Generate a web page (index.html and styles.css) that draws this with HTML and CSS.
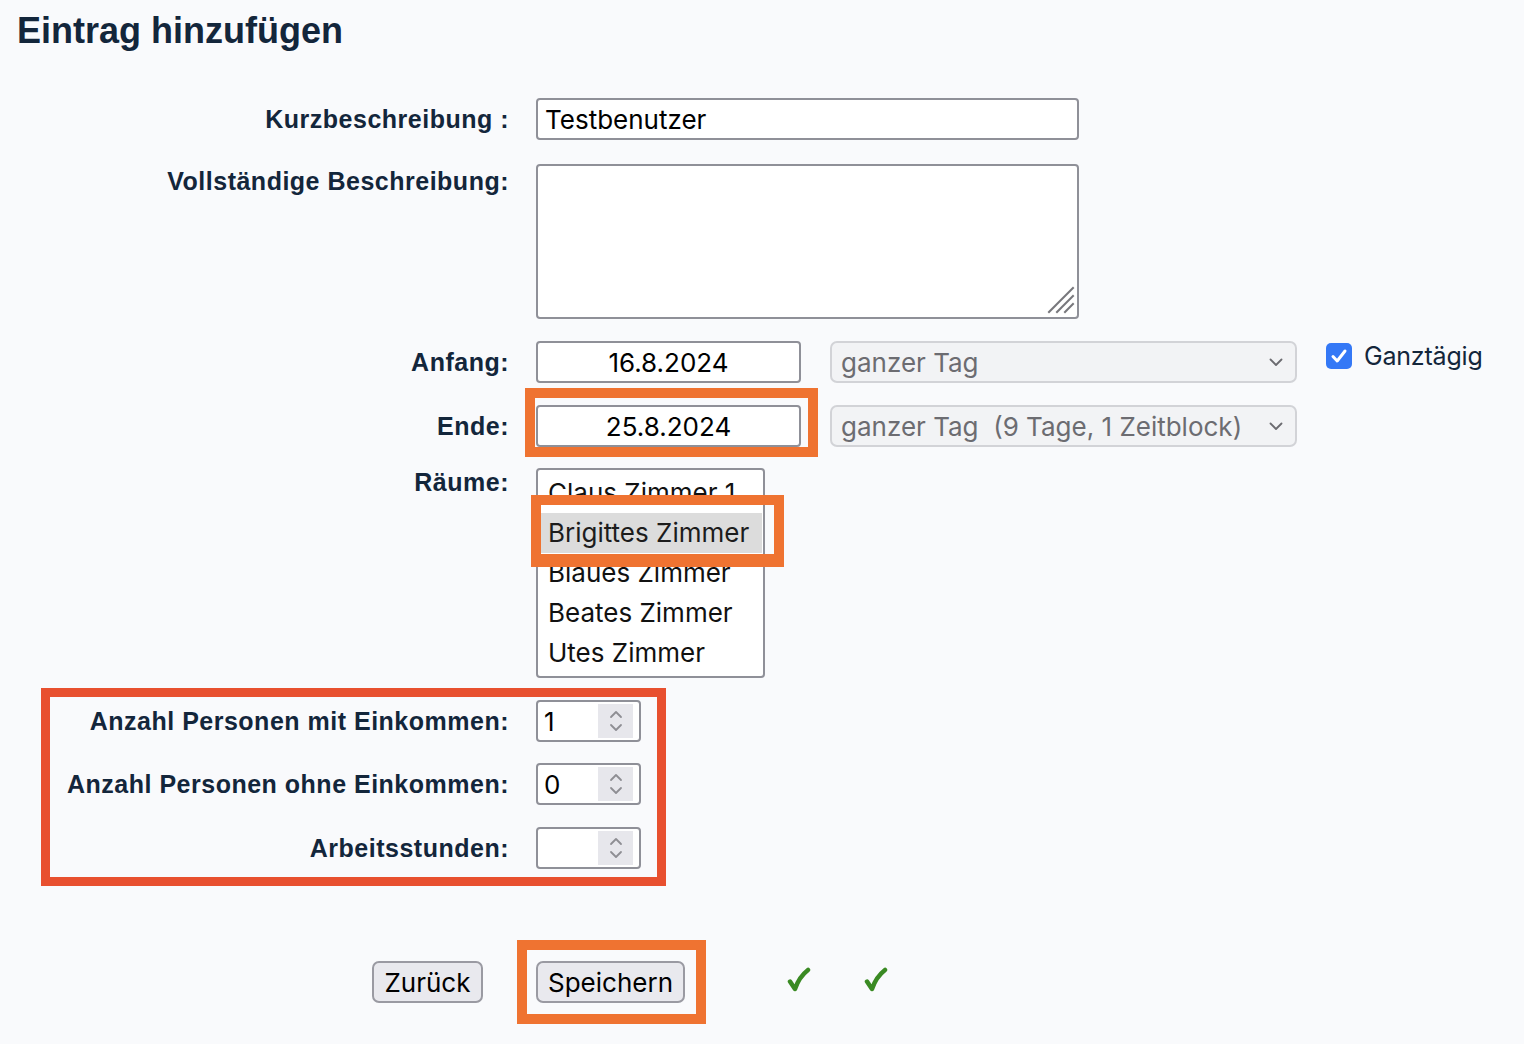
FILE: index.html
```html
<!DOCTYPE html>
<html lang="de">
<head>
<meta charset="utf-8">
<title>Eintrag hinzufügen</title>
<link rel="stylesheet" href="styles.css">
</head>
<body>
<div class="page">
  <h1 class="title">Eintrag hinzufügen</h1>
  <form class="form">
    <label class="lbl">Kurzbeschreibung :</label>
    <div class="field"><input class="text wide" type="text" value="Testbenutzer"></div>

    <label class="lbl lbl-top lbl-area">Vollständige Beschreibung:</label>
    <div class="field area-wrap">
      <textarea class="area"></textarea>
      <svg class="grip" width="28" height="28" viewBox="0 0 28 28"><g stroke="#77777c" stroke-width="2" stroke-linecap="square"><line x1="2" y1="26" x2="26" y2="2"/><line x1="10" y1="26" x2="26" y2="10"/><line x1="18" y1="26" x2="26" y2="18"/></g></svg>
    </div>

    <label class="lbl">Anfang:</label>
    <div class="field inline">
      <input class="text date" type="text" value="16.8.2024">
      <div class="select-wrap">
        <select class="select"><option>ganzer Tag</option></select>
        <svg class="chev" width="14" height="9" viewBox="0 0 14 9"><polyline points="1.5,1.5 7,7 12.5,1.5" fill="none" stroke="#6b6b70" stroke-width="1.8" stroke-linecap="round" stroke-linejoin="round"/></svg>
      </div>
      <span class="allday">
        <span class="cbox"><svg width="26" height="26" viewBox="0 0 26 26"><polyline points="7,13.5 11.2,18 19,8" fill="none" stroke="#fff" stroke-width="3" stroke-linecap="round" stroke-linejoin="round"/></svg></span>
        <span class="allday-text">Ganztägig</span>
      </span>
    </div>

    <label class="lbl">Ende:</label>
    <div class="field inline">
      <input class="text date" type="text" value="25.8.2024">
      <div class="select-wrap">
        <select class="select"><option>ganzer Tag&nbsp;&nbsp;(9 Tage, 1 Zeitblock)</option></select>
        <svg class="chev" width="14" height="9" viewBox="0 0 14 9"><polyline points="1.5,1.5 7,7 12.5,1.5" fill="none" stroke="#6b6b70" stroke-width="1.8" stroke-linecap="round" stroke-linejoin="round"/></svg>
      </div>
    </div>

    <label class="lbl lbl-top lbl-room">Räume:</label>
    <div class="field">
      <div class="listbox" role="listbox">
        <div class="opt" role="option">Claus Zimmer 1</div>
        <div class="opt selected" role="option" aria-selected="true">Brigittes Zimmer</div>
        <div class="opt" role="option">Blaues Zimmer</div>
        <div class="opt" role="option">Beates Zimmer</div>
        <div class="opt" role="option">Utes Zimmer</div>
      </div>
    </div>

    <label class="lbl">Anzahl Personen mit Einkommen:</label>
    <div class="field">
      <div class="num"><input class="num-in" type="text" value="1"><span class="spin"><svg width="14" height="26" viewBox="0 0 14 26"><polyline points="2,9 7,4 12,9" fill="none" stroke="#8e8e93" stroke-width="1.8" stroke-linecap="round" stroke-linejoin="round"/><polyline points="2,17 7,22 12,17" fill="none" stroke="#8e8e93" stroke-width="1.8" stroke-linecap="round" stroke-linejoin="round"/></svg></span></div>
    </div>

    <label class="lbl tight">Anzahl Personen ohne Einkommen:</label>
    <div class="field tight">
      <div class="num"><input class="num-in" type="text" value="0"><span class="spin"><svg width="14" height="26" viewBox="0 0 14 26"><polyline points="2,9 7,4 12,9" fill="none" stroke="#8e8e93" stroke-width="1.8" stroke-linecap="round" stroke-linejoin="round"/><polyline points="2,17 7,22 12,17" fill="none" stroke="#8e8e93" stroke-width="1.8" stroke-linecap="round" stroke-linejoin="round"/></svg></span></div>
    </div>

    <label class="lbl">Arbeitsstunden:</label>
    <div class="field">
      <div class="num"><input class="num-in" type="text" value=""><span class="spin"><svg width="14" height="26" viewBox="0 0 14 26"><polyline points="2,9 7,4 12,9" fill="none" stroke="#8e8e93" stroke-width="1.8" stroke-linecap="round" stroke-linejoin="round"/><polyline points="2,17 7,22 12,17" fill="none" stroke="#8e8e93" stroke-width="1.8" stroke-linecap="round" stroke-linejoin="round"/></svg></span></div>
    </div>

    <div class="btn-cell"><button type="button" class="btn back">Zurück</button></div>
    <div class="field inline actions">
      <button type="button" class="btn save">Speichern</button>
      <svg class="ok first" width="24" height="26" viewBox="0 0 24 26"><path d="M3 14.5 L8 22 Q12 10 21 3" fill="none" stroke="#3a8a23" stroke-width="4.5" stroke-linecap="round" stroke-linejoin="round"/></svg>
      <svg class="ok" width="24" height="26" viewBox="0 0 24 26"><path d="M3 14.5 L8 22 Q12 10 21 3" fill="none" stroke="#3a8a23" stroke-width="4.5" stroke-linecap="round" stroke-linejoin="round"/></svg>
    </div>
  </form>

  <div class="mark mark-ende"></div>
  <div class="mark mark-room"></div>
  <div class="mark mark-red"></div>
  <div class="mark mark-save"></div>
</div>
</body>
</html>
```

FILE: styles.css
```css
* { box-sizing: border-box; }
html, body { margin: 0; padding: 0; }
body {
  background: #f9fafc;
  font-family: "Inter", "Roboto", sans-serif;
  color: #13263b;
}
.page {
  position: relative;
  width: 1524px;
  min-height: 1044px;
}
.title {
  margin: 0;
  padding: 9px 0 0 17px;
  font: bold 36px/44px "Liberation Sans", Arial, sans-serif;
  color: #13263b;
}
.form {
  display: grid;
  grid-template-columns: 509px 1fr;
  column-gap: 27px;
  row-gap: 22px;
  margin-top: 45px;
  align-items: start;
}
.lbl {
  text-align: right;
  font: bold 25px/42px "Liberation Sans", Arial, sans-serif;
  letter-spacing: 0.5px;
  color: #13263b;
  white-space: nowrap;
}
.lbl-top { line-height: 28px; }
.lbl-area { margin-top: 5px; }
.lbl-room { margin-top: -1px; }
.tight { margin-top: -1px; }
.field { min-width: 0; }
.inline { display: flex; align-items: flex-start; }

.text {
  display: block;
  height: 42px;
  border: 2px solid #8f9098;
  border-radius: 4px;
  background: #fff;
  padding: 0 7px;
  font: 26px "Inter", sans-serif;
  color: #000;
  outline: none;
}
.wide { width: 543px; }
.date { width: 265px; text-align: center; }
.area-wrap {
  position: relative;
  width: 543px;
  margin-top: 2px;
}
.area {
  display: block;
  width: 543px;
  height: 155px;
  border: 2px solid #8f9098;
  border-radius: 4px;
  background: #fff;
  font: 26px "Inter", sans-serif;
  outline: none;
  resize: none;
}
.grip {
  position: absolute;
  right: 4px;
  bottom: 5px;
  pointer-events: none;
}

.select-wrap {
  position: relative;
  margin-left: 29px;
  width: 467px;
  height: 42px;
}
.select {
  appearance: none;
  -webkit-appearance: none;
  width: 100%;
  height: 42px;
  border: 2px solid #d2d3d7;
  border-radius: 7px;
  background: #f2f3f5;
  color: #6c6c71;
  font: 26px "Inter", sans-serif;
  padding: 0 0 0 9px;
  outline: none;
}
.chev {
  position: absolute;
  right: 14px;
  top: 17px;
  pointer-events: none;
}
.allday {
  display: flex;
  align-items: center;
  margin-left: 29px;
  margin-top: 1px;
  height: 28px;
}
.cbox {
  width: 26px;
  height: 26px;
  border-radius: 5px;
  background: #3478f6;
  display: block;
}
.cbox svg { display: block; }
.allday-text {
  margin-left: 12px;
  font: 25px "Inter", sans-serif;
  letter-spacing: -0.2px;
  color: #13263b;
}

.listbox {
  width: 229px;
  height: 210px;
  margin-top: -1px;
  border: 2px solid #8f9098;
  border-radius: 4px;
  background: #fff;
  padding: 3px 1px 0 3px;
  overflow: hidden;
}
.opt {
  height: 40px;
  padding-left: 7px;
  font: 26px/40px "Inter", sans-serif;
  color: #111;
  white-space: nowrap;
}
.opt.selected { background: #dcdcdc; color: #1c1c1c; }

.num {
  display: flex;
  align-items: center;
  width: 105px;
  height: 42px;
  border: 2px solid #8f9098;
  border-radius: 4px;
  background: #fff;
  padding: 0 6px 0 6px;
}
.num-in {
  width: 54px;
  border: 0;
  padding: 0;
  background: transparent;
  font: 26px "Inter", sans-serif;
  color: #000;
  outline: none;
}
.spin {
  display: flex;
  align-items: center;
  justify-content: center;
  width: 35px;
  height: 34px;
  background: #e7e7ec;
}
.spin svg { display: block; }

.btn-cell {
  display: flex;
  justify-content: flex-end;
  padding-right: 26px;
  margin-top: 70px;
}
.actions { margin-top: 70px; align-items: center; }
.btn {
  height: 42px;
  border: 2px solid #9a9aa2;
  border-radius: 7px;
  background: #e9e9ee;
  font: 26px "Inter", sans-serif;
  color: #000;
  padding: 0;
}
.back { width: 111px; }
.save { width: 149px; }
.ok {
  display: block;
  margin-left: 53px;
  margin-top: -4px;
}
.ok.first { margin-left: 102px; }

.mark {
  position: absolute;
  pointer-events: none;
  border-style: solid;
}
.mark-ende {
  left: 525px; top: 388px; width: 293px; height: 69px;
  border-width: 10px;
  border-color: #ef7331;
}
.mark-room {
  left: 531px; top: 495px; width: 253px; height: 72px;
  border-width: 10px 10px 13px 10px;
  border-color: #ef7331;
}
.mark-red {
  left: 41px; top: 688px; width: 625px; height: 198px;
  border-width: 9px;
  border-color: #e8502f;
}
.mark-save {
  left: 517px; top: 940px; width: 189px; height: 84px;
  border-width: 10px;
  border-color: #ef7331;
}
```
